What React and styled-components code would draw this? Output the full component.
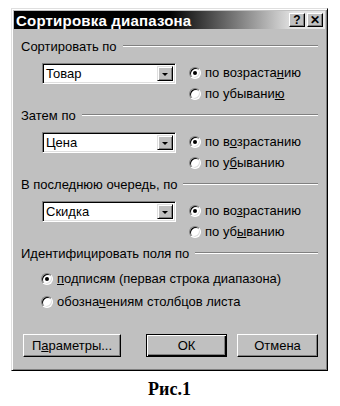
import React from 'react';
import styled, { createGlobalStyle } from 'styled-components';

const GlobalStyle = createGlobalStyle`
  body {
    margin: 0;
    background: #ffffff;
    font-family: "Liberation Sans", Arial, sans-serif;
  }
`;

const Page = styled.div`
  width: 340px;
  height: 406px;
  display: flex;
  flex-direction: column;
  padding: 8px 0 0 11px;
  box-sizing: border-box;
`;

const Dialog = styled.div`
  width: 317px;
  height: 363px;
  box-sizing: border-box;
  background: #c0c0c0;
  border-top: 1px solid #dfdfdf;
  border-left: 1px solid #dfdfdf;
  border-right: 1px solid #000;
  border-bottom: 1px solid #000;
  box-shadow: inset 1px 1px #fff, inset -1px -1px #808080;
  padding: 2px;
  display: flex;
  flex-direction: column;
`;

const TitleBar = styled.div`
  height: 18px;
  display: flex;
  align-items: center;
  justify-content: space-between;
  padding: 0 2px 0 2px;
  background: linear-gradient(90deg, #000 0%, #000 50%, #e4e4e4 90%, #e8e8e8 100%);
`;

const TitleText = styled.span`
  color: #fff;
  font-weight: bold;
  font-size: 15px;
  letter-spacing: 0.2px;
`;

const TitleButtons = styled.div`
  display: flex;
  gap: 2px;
`;

const TitleButton = styled.div`
  width: 16px;
  height: 14px;
  box-sizing: border-box;
  background: #c0c0c0;
  border-top: 1px solid #fff;
  border-left: 1px solid #fff;
  border-right: 1px solid #000;
  border-bottom: 1px solid #000;
  box-shadow: inset -1px -1px #808080;
  display: flex;
  align-items: center;
  justify-content: center;
  font-size: 12px;
  font-weight: bold;
  color: #000;
  line-height: 1;
`;

const Content = styled.div`
  display: flex;
  flex-direction: column;
  padding: 10px 7px 0 7px;
`;

const Section = styled.div`
  display: flex;
  flex-direction: column;
  margin-bottom: ${p => p.$gap || 4}px;
`;

const GroupHeader = styled.div`
  display: flex;
  align-items: center;
  gap: 6px;
  height: 14px;
  font-size: 13px;
  color: #000;
  margin-bottom: ${p => p.$after || 9}px;
`;

const GroupLine = styled.div`
  flex: 1;
  height: 0;
  border-top: 1px solid #808080;
  border-bottom: 1px solid #fff;
`;

const SortRow = styled.div`
  display: flex;
  align-items: flex-start;
  padding-left: 21px;
  gap: 13px;
`;

const Combo = styled.div`
  width: 134px;
  height: 21px;
  box-sizing: border-box;
  margin-top: 1px;
  background: #fff;
  border-top: 1px solid #808080;
  border-left: 1px solid #808080;
  border-right: 1px solid #fff;
  border-bottom: 1px solid #fff;
  box-shadow: inset 1px 1px #000, inset -1px -1px #dfdfdf;
  display: flex;
  align-items: center;
  padding: 2px;
`;

const ComboText = styled.span`
  flex: 1;
  font-size: 13px;
  padding-left: 1px;
  color: #000;
`;

const ComboButton = styled.div`
  width: 16px;
  height: 15px;
  box-sizing: border-box;
  background: #c0c0c0;
  border-top: 1px solid #dfdfdf;
  border-left: 1px solid #dfdfdf;
  border-right: 1px solid #000;
  border-bottom: 1px solid #000;
  box-shadow: inset 1px 1px #fff, inset -1px -1px #808080;
  display: flex;
  align-items: center;
  justify-content: center;

  &::after {
    content: "";
    border-left: 3px solid transparent;
    border-right: 3px solid transparent;
    border-top: 3px solid #000;
    margin-top: 1px;
  }
`;

const RadioColumn = styled.div`
  display: flex;
  flex-direction: column;
`;

const RadioRow = styled.div`
  display: flex;
  align-items: center;
  gap: 4px;
  height: ${p => p.$h || 21}px;
  font-size: 13px;
  color: #000;
`;

const RadioCircle = styled.span`
  width: 12px;
  height: 12px;
  box-sizing: border-box;
  border-radius: 50%;
  background: #fff;
  border: 1px solid;
  border-color: #808080 #fff #fff #808080;
  box-shadow: inset 1px 1px #000, inset -1px -1px #dfdfdf;
  display: flex;
  align-items: center;
  justify-content: center;

  &::after {
    content: "";
    width: 4px;
    height: 4px;
    border-radius: 50%;
    background: ${p => (p.$checked ? '#000' : 'transparent')};
  }
`;

const IdentList = styled.div`
  display: flex;
  flex-direction: column;
  padding-left: 20px;
`;

const ButtonBar = styled.div`
  display: flex;
  align-items: center;
  padding: 0 0 0 2px;
  margin-top: 17px;
`;

const Button = styled.div`
  width: ${p => p.$w}px;
  height: 23px;
  margin-right: ${p => p.$mr || 0}px;
  box-sizing: border-box;
  background: #c0c0c0;
  border-top: 1px solid ${p => (p.$default ? '#000' : '#fff')};
  border-left: 1px solid ${p => (p.$default ? '#000' : '#fff')};
  border-right: 1px solid #000;
  border-bottom: 1px solid #000;
  box-shadow: ${p =>
    p.$default
      ? 'inset 1px 1px #fff, inset -1px -1px #000, inset -2px -2px #808080'
      : 'inset -1px -1px #808080'};
  display: flex;
  align-items: center;
  justify-content: center;
  font-size: 13px;
  color: #000;
`;

const Caption = styled.div`
  width: 317px;
  text-align: center;
  font-family: "Liberation Serif", "Times New Roman", serif;
  font-weight: bold;
  font-size: 18px;
  margin-top: 8px;
`;

const U = styled.span`
  text-decoration: underline;
  text-underline-offset: 1px;
`;

const sections = [
  {
    title: 'Сортировать по',
    value: 'Товар',
    asc: <>по возраста<U>н</U>ию</>,
    desc: <>по убывани<U>ю</U></>,
  },
  {
    title: 'Затем по',
    value: 'Цена',
    asc: <>по в<U>о</U>зрастанию</>,
    desc: <>по у<U>б</U>ыванию</>,
  },
  {
    title: 'В последнюю очередь, по',
    value: 'Скидка',
    asc: <>по во<U>з</U>растанию</>,
    desc: <>по уб<U>ы</U>ванию</>,
  },
];

export default function App() {
  return (
    <>
      <GlobalStyle />
      <Page>
        <Dialog>
          <TitleBar>
            <TitleText>Сортировка диапазона</TitleText>
            <TitleButtons>
              <TitleButton>?</TitleButton>
              <TitleButton>✕</TitleButton>
            </TitleButtons>
          </TitleBar>
          <Content>
            {sections.map(s => (
              <Section key={s.title}>
                <GroupHeader>
                  <span>{s.title}</span>
                  <GroupLine />
                </GroupHeader>
                <SortRow>
                  <Combo>
                    <ComboText>{s.value}</ComboText>
                    <ComboButton />
                  </Combo>
                  <RadioColumn>
                    <RadioRow>
                      <RadioCircle $checked />
                      <span>{s.asc}</span>
                    </RadioRow>
                    <RadioRow>
                      <RadioCircle />
                      <span>{s.desc}</span>
                    </RadioRow>
                  </RadioColumn>
                </SortRow>
              </Section>
            ))}
            <Section>
              <GroupHeader $after={7}>
                <span>Идентифицировать поля по</span>
                <GroupLine />
              </GroupHeader>
              <IdentList>
                <RadioRow $h={23}>
                  <RadioCircle $checked />
                  <span><U>п</U>одписям (первая строка диапазона)</span>
                </RadioRow>
                <RadioRow $h={23}>
                  <RadioCircle />
                  <span>обозна<U>ч</U>ениям столбцов листа</span>
                </RadioRow>
              </IdentList>
            </Section>
            <ButtonBar>
              <Button $w={98} $mr={25}>П<U>а</U>раметры...</Button>
              <Button $w={81} $mr={10} $default>ОК</Button>
              <Button $w={81}>Отмена</Button>
            </ButtonBar>
          </Content>
        </Dialog>
        <Caption>Рис.1</Caption>
      </Page>
    </>
  );
}
